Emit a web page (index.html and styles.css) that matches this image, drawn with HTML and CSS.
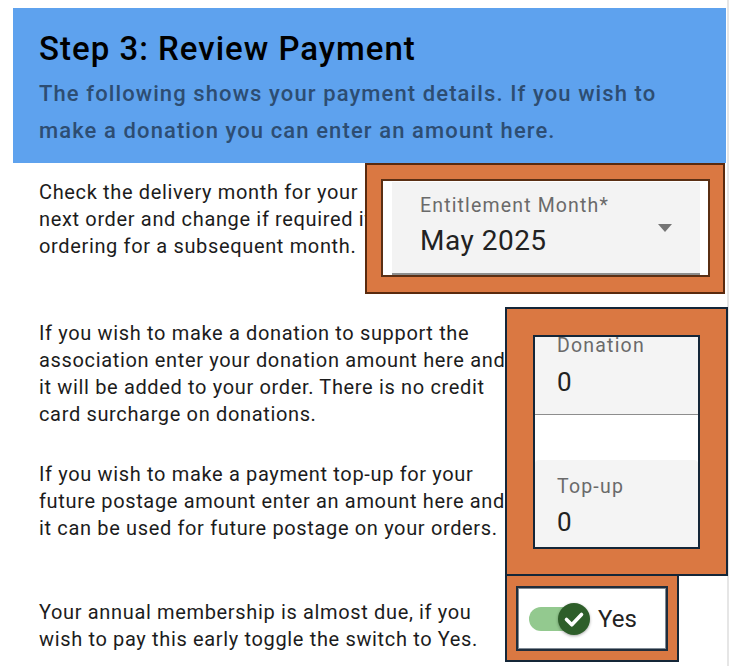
FILE: index.html
```html
<!DOCTYPE html>
<html lang="en">
<head>
<meta charset="utf-8">
<title>Step 3: Review Payment</title>
<link rel="stylesheet" href="styles.css">
</head>
<body>
<div class="page">
  <header class="header">
    <h1 class="title">Step 3: Review Payment</h1>
    <p class="subtitle">The following shows your payment details. If you wish to make a donation you can enter an amount here.</p>
  </header>

  <section class="row row-month">
    <p class="text text-month">Check the delivery month for your next order and change if required if ordering for a subsequent month.</p>
    <div class="callout callout-brown callout-month">
      <div class="frame frame-brown">
        <div class="select-field">
          <div class="field-body">
            <div class="field-label">Entitlement Month*</div>
            <div class="field-value">May 2025</div>
          </div>
          <span class="select-arrow"></span>
        </div>
      </div>
    </div>
  </section>

  <section class="row row-amounts">
    <div class="text text-amounts">
      <p class="para">If you wish to make a donation to support the association enter your donation amount here and it will be added to your order. There is no credit card surcharge on donations.</p>
      <p class="para para-topup">If you wish to make a payment top-up for your future postage amount enter an amount here and it can be used for future postage on your orders.</p>
    </div>
    <div class="callout callout-navy callout-amounts">
      <div class="frame frame-navy frame-amounts">
        <div class="input-field input-donation">
          <div class="field-label small">Donation</div>
          <div class="field-value num">0</div>
        </div>
        <div class="input-field input-topup">
          <div class="field-label small">Top-up</div>
          <div class="field-value num">0</div>
        </div>
      </div>
    </div>
  </section>

  <section class="row row-member">
    <p class="text text-member">Your annual membership is almost due, if you wish to pay this early toggle the switch to Yes.</p>
    <div class="callout callout-navy callout-member">
      <div class="frame frame-navy frame-member">
        <div class="switch">
          <span class="switch-track"></span>
          <span class="switch-thumb">
            <svg width="32" height="32" viewBox="0 0 32 32"><path d="M8.5 16.5 L13.8 21.8 L23.5 11.5" fill="none" stroke="#ffffff" stroke-width="3.6" stroke-linecap="round" stroke-linejoin="round"/></svg>
          </span>
        </div>
        <span class="switch-label">Yes</span>
      </div>
    </div>
  </section>
</div>
</body>
</html>
```

FILE: styles.css
```css
* { box-sizing: border-box; }

html, body {
  margin: 0;
  padding: 0;
  background: #ffffff;
}

body {
  font-family: Roboto, "Liberation Sans", Arial, sans-serif;
  color: #1c1c1c;
  overflow: hidden;
}

.page {
  width: 729px;
  min-height: 666px;
  border-right: 2px solid #e6e6e6;
  padding-top: 8px;
}

.header {
  margin-left: 13px;
  width: 713px;
  height: 155px;
  background: #5ea2ee;
  padding: 22px 0 0 26px;
}

.title {
  margin: 0;
  font-size: 33px;
  line-height: 38px;
  font-weight: 500;
  letter-spacing: 1px;
  color: #000000;
}

.subtitle {
  margin: 7px 0 0 0;
  font-size: 22px;
  line-height: 37px;
  font-weight: 500;
  letter-spacing: 1.1px;
  color: #2d4d72;
  width: 650px;
}

.row {
  display: grid;
  align-items: start;
}

.text {
  margin: 0;
  font-size: 20px;
  line-height: 27px;
  letter-spacing: 0.65px;
  color: #1c1c1c;
  grid-row: 1;
  grid-column: 2 / 4;
}

.para { margin: 0; }
.para-topup { margin-top: 33px; }

.callout {
  grid-row: 1;
  grid-column: 3;
  position: relative;
  z-index: 1;
  background: #da7842;
  border: 2px solid #142638;
}

.callout-brown { border-color: #5a2a0e; }

/* Row 1 */
.row-month {
  grid-template-columns: 39px 326px 360px;
}
.text-month {
  width: 345px;
  margin-top: 16px;
}
.callout-month {
  height: 131px;
  padding: 14px 13px 15px 14px;
}

.frame {
  background: #ffffff;
  border: 2px solid #142638;
}
.frame-brown {
  border-color: #5a2f14;
  height: 98px;
  padding: 1px 8px 0 9px;
}

.select-field {
  display: flex;
  height: 93px;
  background: #f3f3f3;
  border-bottom: 2px solid #8d8d8d;
  padding: 12px 28px 0 28px;
}

.field-body {
  display: flex;
  flex-direction: column;
}

.field-label {
  font-size: 19.5px;
  line-height: 23px;
  color: #6a6a6a;
  letter-spacing: 1.15px;
}

.field-value {
  margin-top: 7px;
  font-size: 28px;
  line-height: 34px;
  color: #222222;
  letter-spacing: 0.5px;
}

.select-arrow {
  margin-left: auto;
  margin-top: 30px;
  width: 0;
  height: 0;
  border-left: 7.5px solid transparent;
  border-right: 7.5px solid transparent;
  border-top: 8px solid #757575;
}

/* Row 2 */
.row-amounts {
  margin-top: 13px;
  grid-template-columns: 39px 466px 223px;
}
.text-amounts {
  width: 472px;
  margin-top: 13px;
}
.callout-amounts {
  height: 269px;
  padding: 26px;
}
.frame-amounts {
  height: 214px;
  overflow: hidden;
  display: flex;
  flex-direction: column;
}

.input-field {
  background: #f4f4f4;
  padding-left: 22px;
}
.input-donation {
  height: 78px;
  border-bottom: 1.5px solid #8d8d8d;
}
.input-donation .field-label { margin-top: -3px; }
.input-topup {
  margin-top: 45px;
  flex: 1;
  border-radius: 4px 4px 0 0;
  padding-top: 15px;
}
.field-label.small { letter-spacing: 1.2px; }
.field-value.num {
  font-size: 26px;
  line-height: 32px;
  margin-top: 9px;
  letter-spacing: 0;
}
.input-topup .field-value.num { margin-top: 8px; }

/* Row 3 */
.row-member {
  margin-top: -2px;
  grid-template-columns: 39px 466px 174px;
}
.text-member {
  width: 472px;
  margin-top: 25px;
}
.callout-member {
  height: 88px;
  padding: 10px 9px 9px 9px;
}
.frame-member {
  height: 65px;
  display: flex;
  align-items: center;
  padding-left: 11px;
  border-color: #1f2d3c;
  box-shadow: inset 0 0 0 1px #7f8a94;
}

.switch {
  display: grid;
  width: 61px;
  height: 32px;
  align-items: center;
}
.switch-track {
  grid-area: 1 / 1;
  justify-self: start;
  width: 46px;
  height: 24px;
  border-radius: 12px;
  background: #93c98f;
}
.switch-thumb {
  grid-area: 1 / 1;
  justify-self: end;
  width: 32px;
  height: 32px;
  border-radius: 50%;
  background: #2e5e2a;
  box-shadow: 0 1px 3px rgba(0, 0, 0, 0.35);
  display: flex;
}
.switch-label {
  margin-left: 8px;
  font-size: 24px;
  line-height: 28px;
  color: #222222;
}
```
